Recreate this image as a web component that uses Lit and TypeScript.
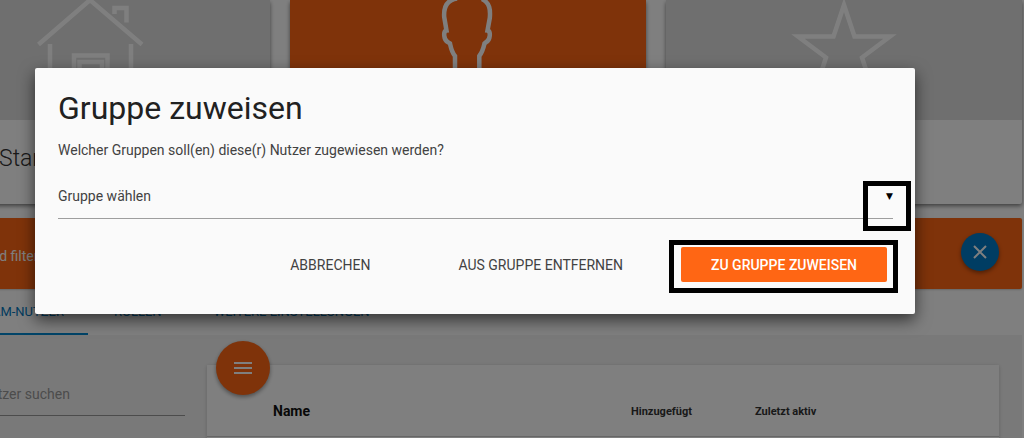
import { LitElement, html, css } from "lit";
import { customElement } from "lit/decorators.js";

@customElement("app-root")
export class AppRoot extends LitElement {
  static styles = css`
    :host {
      display: block;
      position: relative;
      height: 100vh;
      overflow: hidden;
      background: #fff;
      color: #333;
      font-family: Roboto, "Liberation Sans", sans-serif;
      font-size: 14px;
    }
    * { box-sizing: border-box; }
    button, input, select { font: inherit; border: 0; margin: 0; border-radius: 0; }
    h1, h2, p { margin: 0; font-weight: 400; }
    svg { display: block; fill: none; }

    .page { margin: 0 2px 0 -86px; }
    .cards { display: grid; grid-template-columns: repeat(3, 1fr); gap: 20px; }
    .card {
      height: 204px;
      box-shadow: 0 2px 4px rgba(0, 0, 0, 0.5);
      border-radius: 2px;
    }
    .cover {
      height: 120px;
      display: flex;
      justify-content: center;
      background: #dedede;
      color: #fff;
    }
    .cover.active { background: #ff6614; }
    .card h2 { padding: 23px 0 0 85px; font-size: 23px; line-height: 32px; font-weight: 300; }

    .filter {
      margin-top: 14px;
      height: 71px;
      padding: 0 23px 0 20px;
      display: flex;
      align-items: center;
      justify-content: space-between;
      background: #ff6614;
      color: #fff;
      border-radius: 2px;
      box-shadow: 0 1px 2px rgba(0, 0, 0, 0.2);
    }
    .filter span { padding-top: 5px; white-space: nowrap; }
    .round {
      display: grid;
      place-items: center;
      padding: 0;
      border-radius: 50%;
      color: #fff;
      box-shadow: 0 2px 4px rgba(0, 0, 0, 0.4);
    }
    .close { width: 38px; height: 38px; margin-top: -4px; background: #007ac6; }

    .tabs { display: flex; height: 46px; font-size: 13px; line-height: 46px; }
    .tabs a { padding: 0 26px; color: #0277bd; text-decoration: none; }
    .tabs a.current {
      width: 174px;
      padding: 0 24px 0 0;
      text-align: right;
      border-bottom: 2px solid #0288d1;
    }

    .body { display: flex; gap: 22px; padding: 30px 23px 0 0; background: #f3f3f3; height: 200px; }
    .search { width: 271px; }
    .search input {
      width: 100%;
      height: 51px;
      padding: 8px 0 0 66px;
      background: none;
      border-bottom: 1px solid #999;
    }
    .search input::placeholder { color: #999; opacity: 1; }
    .panel { position: relative; flex: 1; background: #fff; box-shadow: 0 1px 4px rgba(0, 0, 0, 0.2); }
    .fab {
      position: absolute;
      left: 9px;
      top: -24px;
      width: 54px;
      height: 54px;
      background: #ff6614;
    }
    table { width: 100%; border-collapse: collapse; table-layout: fixed; }
    th { height: 71px; padding: 22px 0 0; text-align: left; font-size: 11px; font-weight: 700; border-bottom: 1px solid #ccc; }
    th.name { width: 424px; padding-left: 66px; font-size: 14px; color: #111; }
    th.added { width: 124px; }

    .shade { position: absolute; inset: 0; background: rgba(0, 0, 0, 0.5); }
    .dialog {
      position: absolute;
      top: 68px;
      left: 35px;
      right: 109px;
      padding: 22px 22px 32px 23px;
      background: #fafafa;
      border-radius: 2px;
      box-shadow: 0 6px 16px rgba(0, 0, 0, 0.6);
    }
    .dialog h1 { font-size: 32px; line-height: 36px; color: #212121; }
    .dialog p { margin-top: 14px; line-height: 20px; color: #424242; }
    .field { display: grid; margin-top: 20px; height: 39px; border-bottom: 1px solid #9e9e9e; }
    .field > * { grid-area: 1 / 1; }
    .field select {
      appearance: none;
      width: 100%;
      height: 32px;
      padding: 0;
      background: none;
      color: #424242;
    }
    .arrow {
      position: relative;
      justify-self: end;
      width: 10px;
      height: 32px;
      text-align: right;
      font: 9px/32px "DejaVu Sans", sans-serif;
      color: #000;
      pointer-events: none;
    }
    .mark { position: absolute; border: 5px solid #000; pointer-events: none; }
    .arrow .mark { inset: 1px -18px -19px -20px; }
    .actions { display: flex; justify-content: flex-end; gap: 28px; margin-top: 28px; padding-right: 6px; }
    .actions button { height: 35px; padding: 0 30px; background: none; color: #424242; }
    .actions .primary {
      display: block;
      background: #ff6614;
      color: #fff;
      font-weight: 500;
      border-radius: 2px;
    }
    .target { position: relative; }
    .target .mark { inset: -7px -11px -11px -12px; }
  `;

  render() {
    return html`
      <main class="page">
        <section class="cards">
          <article class="card">
            <div class="cover">
              <svg width="110" height="120" viewBox="37 0 110 120" stroke="currentColor" stroke-width="4.5">
                <path d="M38.500 44.500 90 0 142 44.500M50 44V100M131 44V100M114.500 14V8H126.500V22.500M74 100V55.500H107.500V100M79.500 100V62H102V100" />
              </svg>
            </div>
            <h2>Startseite</h2>
          </article>
          <article class="card">
            <div class="cover active">
              <svg width="110" height="120" viewBox="413 0 110 120" stroke="currentColor" stroke-width="4.500">
                <path d="M457 -1.500C447 0 443.500 7 444.200 17L446.500 30.500C443 31 443.500 40 448 42.200L450 43.500C451 48 451.500 52 455 56V100M482 -1C490 3 490.500 10 489.800 18L487.500 30.500C491 31 490.500 40 486 42.200L484.500 43.500C483.500 48 482.500 52 479.300 56V100" />
              </svg>
            </div>
          </article>
          <article class="card">
            <div class="cover">
              <svg width="110" height="120" viewBox="789 0 110 120" stroke="currentColor" stroke-width="4.500">
                <path d="M844 5 833.500 36.500H798L826 57.500 815 91 844 71 873 91 862 57.500 890 36.500H854.500Z" />
              </svg>
            </div>
          </article>
        </section>

        <section class="filter">
          <span>Suchen und filteren</span>
          <button class="round close" aria-label="Schließen">
            <svg width="14" height="14" stroke="currentColor" stroke-width="2"><path d="M1 1 13 13M13 1 1 13" /></svg>
          </button>
        </section>

        <nav class="tabs">
          <a class="current" href="#nutzer">TEAM-NUTZER</a>
          <a href="#rollen">ROLLEN</a>
          <a href="#einstellungen">WEITERE EINSTELLUNGEN</a>
        </nav>

        <section class="body">
          <div class="search"><input type="search" aria-label="Nutzer suchen" placeholder="Nutzer suchen" /></div>
          <div class="panel">
            <table>
              <thead>
                <tr>
                  <th class="name">Name</th>
                  <th class="added">Hinzugefügt</th>
                  <th>Zuletzt aktiv</th>
                </tr>
              </thead>
            </table>
            <button class="round fab" aria-label="Menü">
              <svg width="18" height="12" stroke="currentColor" stroke-width="2"><path d="M0 1H18M0 6H18M0 11H18" /></svg>
            </button>
          </div>
        </section>
      </main>

      <div class="shade"></div>

      <section class="dialog" role="dialog" aria-labelledby="title">
        <h1 id="title">Gruppe zuweisen</h1>
        <p id="question">Welcher Gruppen soll(en) diese(r) Nutzer zugewiesen werden?</p>
        <div class="field">
          <select aria-labelledby="question">
            <option>Gruppe wählen</option>
          </select>
          <span class="arrow">▼<i class="mark"></i></span>
        </div>
        <div class="actions">
          <button>ABBRECHEN</button>
          <button>AUS GRUPPE ENTFERNEN</button>
          <div class="target">
            <button class="primary">ZU GRUPPE ZUWEISEN</button>
            <i class="mark"></i>
          </div>
        </div>
      </section>
    `;
  }
}
